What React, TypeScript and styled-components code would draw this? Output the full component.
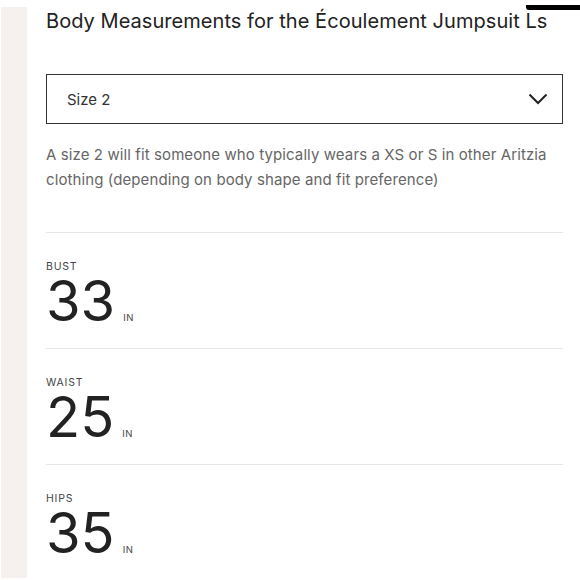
import { createGlobalStyle, styled } from 'styled-components';

const GlobalStyle = createGlobalStyle`
  body {
    margin: 0;
    background: #ffffff;
    font-family: Inter, "Liberation Sans", sans-serif;
  }
`;

const measurements = [
  { label: 'BUST', value: '33' },
  { label: 'WAIST', value: '25' },
  { label: 'HIPS', value: '35' },
];

const App = () => {
  return (
    <>
      <GlobalStyle />
      <Page>
        <Sidebar />
        <Main>
          <Title>Body Measurements for the Écoulement Jumpsuit Ls</Title>
          <Select>
            <SelectText>Size 2</SelectText>
            <svg width="20" height="12" viewBox="0 0 20 12" fill="none">
              <path d="M1.5 1.5 L10 10 L18.5 1.5" stroke="#222" strokeWidth="2" />
            </svg>
          </Select>
          <Description>
            A size 2 will fit someone who typically wears a XS or S in other Aritzia clothing
            (depending on body shape and fit preference)
          </Description>
          {measurements.map((m) => (
            <Row key={m.label}>
              <Label>{m.label}</Label>
              <ValueLine>
                <Value>{m.value}</Value>
                <Unit>IN</Unit>
              </ValueLine>
            </Row>
          ))}
        </Main>
        <TopBar />
      </Page>
    </>
  );
};

export default App;

const Page = styled.div`
  position: relative;
  display: flex;
  width: 580px;
  height: 580px;
  overflow: hidden;
`;

const Sidebar = styled.div`
  width: 26px;
  margin: 7px 0 2px 1px;
  background: #f6f1ef;
  flex-shrink: 0;
`;

const Main = styled.div`
  width: 517px;
  padding-left: 19px;
`;

const Title = styled.h1`
  margin: 9px 0 0;
  font-size: 20px;
  font-weight: 400;
  line-height: 25px;
  color: #222;
  white-space: nowrap;
  letter-spacing: 0.05px;
`;

const Select = styled.div`
  margin-top: 40px;
  height: 48px;
  border: 1px solid #333;
  display: flex;
  align-items: center;
  justify-content: space-between;
  padding: 0 14px 0 20px;
`;

const SelectText = styled.span`
  font-size: 15px;
  color: #333;
`;

const Description = styled.p`
  margin: 18px 0 0;
  font-size: 15px;
  letter-spacing: 0.1px;
  line-height: 25px;
  color: #666;
  padding-bottom: 40px;
  border-bottom: 1px solid #e6e6e6;
`;

const Row = styled.div`
  padding: 27px 0 24px;
  border-bottom: 1px solid #e6e6e6;
`;

const Label = styled.div`
  font-size: 10.5px;
  letter-spacing: 0.8px;
  color: #444;
  line-height: 14px;
  margin-bottom: 4px;
`;

const ValueLine = styled.div`
  display: flex;
  align-items: baseline;
  gap: 8px;
  height: 46px;
`;

const Value = styled.span`
  font-size: 56px;
  line-height: 46px;
  font-weight: 400;
  color: #222;
`;

const Unit = styled.span`
  font-size: 9.5px;
  line-height: 10px;
  letter-spacing: 0.5px;
  color: #444;
`;

const TopBar = styled.div`
  position: absolute;
  top: 5px;
  right: 0;
  width: 54px;
  height: 5px;
  background: #000;
  border-bottom-left-radius: 3px;
`;
